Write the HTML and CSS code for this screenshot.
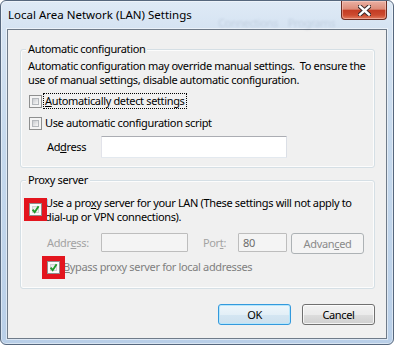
FILE: index.html
```html
<!DOCTYPE html>
<html>
<head>
<meta charset="utf-8">
<link rel="stylesheet" href="styles.css">
</head>
<body>
<div class="window">
  <div class="glass"><span class="g-conn">Connections</span><span class="g-prog">Programs</span></div>
  <div class="titlebar">
    <span class="title">Local Area Network (LAN) Settings</span>
    <div class="close">
      <svg width="13" height="11" viewBox="0 0 13 11"><path d="M2 1.5 L11 9.5 M11 1.5 L2 9.5" stroke="#3b2a2a" stroke-width="4.4" stroke-linecap="square"/><path d="M2 1.5 L11 9.5 M11 1.5 L2 9.5" stroke="#ffffff" stroke-width="2.4" stroke-linecap="square"/></svg>
    </div>
  </div>
  <div class="client">
    <div class="group g1">
      <span class="gtitle">Automatic configuration</span>
      <p class="desc">Automatic configuration may override manual settings.&nbsp; To ensure the<br>use of manual settings, disable automatic configuration.</p>
      <div class="row r1"><span class="cb"><i></i></span><span class="lbl focus"><u>A</u>utomatically detect settings</span></div>
      <div class="row r2"><span class="cb"><i></i></span><span class="lbl">Use automatic configuration script</span></div>
      <div class="addr"><span class="alabel">Ad<u>d</u>ress</span><span class="tb tb-wide"></span></div>
    </div>
    <div class="group g2">
      <span class="gtitle">Proxy server</span>
      <div class="row proxy"><span class="cb checked mark up"><i></i><svg class="check" width="9" height="9" viewBox="0 0 9 9"><path d="M1.6 4.6 L3.7 7.2 L7.6 1.2" fill="none" stroke="#1f9b2b" stroke-width="1.9"/></svg></span><span class="lbl">Use a pro<u>x</u>y server for your LAN (These settings will not apply to<br>dial-up or VPN connections).</span></div>
      <div class="prow"><span class="dlabel addr-l">Addr<u>e</u>ss:</span><span class="tb dis tb-addr"></span><span class="dlabel port-l">Por<u>t</u>:</span><span class="tb dis tb-port">80</span><span class="btn adv">Advan<u>c</u>ed</span></div>
      <div class="row bypass"><span class="cb checked mark"><i></i><svg class="check" width="9" height="9" viewBox="0 0 9 9"><path d="M1.6 4.6 L3.7 7.2 L7.6 1.2" fill="none" stroke="#1f9b2b" stroke-width="1.9"/></svg></span><span class="lbl dim"><u>B</u>ypass proxy server for local addresses</span></div>
    </div>
    <div class="buttons"><span class="btn ok">OK</span><span class="btn cancel">Cancel</span></div>
  </div>
</div>
</body>
</html>
```
FILE: styles.css
```css
* { box-sizing: border-box; }
html, body { margin: 0; padding: 0; }
body {
  width: 394px;
  height: 345px;
  overflow: hidden;
  background: #ffffff;
  font-family: "Noto Sans", "Open Sans", sans-serif;
  font-size: 11px;
  letter-spacing: -0.35px;
  color: #000;
}
.window {
  position: relative;
  width: 394px;
  height: 345px;
  border: 1px solid #56677d;
  border-radius: 6px;
  background: linear-gradient(180deg, #dfeaf6 0, #d5e3f2 28px, #c6d9ed 140px, #b9cfe8 100%);
  box-shadow: inset 0 0 0 1px rgba(255,255,255,0.45);
  padding: 0 6px 5px 6px;
  display: flex;
  flex-direction: column;
  overflow: hidden;
}
.glass {
  position: absolute;
  left: 217px;
  top: 14px;
  display: flex;
  white-space: nowrap;
  color: rgba(40, 60, 90, 0.12);
  filter: blur(1.3px);
  font-size: 11px;
  letter-spacing: -0.4px;
}
.g-prog { margin-left: 10px; }
.titlebar {
  position: relative;
  height: 28px;
  display: flex;
  align-items: flex-start;
  padding-left: 1px;
}
.title {
  line-height: 28px;
  font-size: 11.5px;
  letter-spacing: 0;
  color: #000;
}
.close {
  margin-left: auto;
  width: 46px;
  height: 19px;
  border: 1px solid #6b2c22;
  border-top: none;
  border-radius: 0 0 4px 4px;
  background: linear-gradient(180deg, #eab0a3 0%, #dc8c79 45%, #c43d24 52%, #cc4a2f 78%, #e27c5f 100%);
  box-shadow: inset 0 0 0 1px rgba(255,220,210,0.45);
  display: flex;
  align-items: center;
  justify-content: center;
}
.close svg { display: block; }
.client {
  flex: 1;
  border: 1px solid #6f7b89;
  box-shadow: 0 0 0 1px rgba(255,255,255,0.5);
  background: #f0f0f0;
  padding: 19px 11px 0 12px;
  display: flex;
  flex-direction: column;
}
.group {
  border: 1px solid #d5dfe5;
  border-radius: 3px;
  box-shadow: inset 0 0 0 1px rgba(255,255,255,0.8);
  display: flex;
  flex-direction: column;
  align-items: flex-start;
  padding: 0 7px 9px 7px;
}
.g2 { margin-top: 12px; padding-bottom: 13px; }
.gtitle {
  margin: -8px 0 0 -2px;
  padding: 0 2px;
  background: #f0f0f0;
  line-height: 14px;
}
.desc {
  margin: 3px 0 0 0;
  line-height: 14px;
  white-space: nowrap;
}
.row { display: flex; align-items: center; }
.r1 { margin-top: 6px; height: 16px; }
.r2 { margin-top: 6px; height: 16px; }
.cb {
  position: relative;
  width: 13px;
  height: 13px;
  flex: none;
  margin-left: 1px;
  border: 1px solid #8e8f8f;
  background: #f4f4f4;
  padding: 2px;
}
.cb i {
  display: block;
  width: 7px;
  height: 7px;
  border: 1px solid #b4b8bc;
  background: linear-gradient(135deg, #c9ccd0 0%, #e6e7e8 60%, #f7f7f7 100%);
}
.cb.checked { background: #fbfbfb; }
.cb.checked i {
  border-color: #d0d3d6;
  background: linear-gradient(135deg, #e6e7e8 0%, #f7f7f7 100%);
}
.check {
  position: absolute;
  left: 1px;
  top: 1px;
  display: block;
}
.mark {
  outline: 5px solid #e3151e;
  z-index: 1;
}
.up { margin-bottom: 2px; }
.lbl { margin-left: 3px; line-height: 14px; white-space: nowrap; }
.focus { margin-left: 2px; padding: 0 1px; outline: 1px dotted #000; }
.addr { margin-top: 5px; display: flex; align-items: center; }
.alabel { width: 54px; margin-left: 19px; line-height: 14px; }
.tb {
  background: #fff;
  border: 1px solid;
  border-color: #abadb3 #dbdfe6 #e3e9ef #e2e3ea;
  border-radius: 1px;
}
.tb-wide { width: 186px; height: 22px; }
.proxy { margin-top: 9px; }
.proxy .lbl { margin-left: 3px; }
.prow { margin-top: 9px; display: flex; align-items: flex-start; }
.dlabel { color: #a3a3a3; line-height: 19px; }
.addr-l { width: 54px; margin-left: 19px; }
.port-l { width: 35px; margin-left: 15px; }
.tb.dis {
  background: #f4f4f4;
  border-color: #bdbdbd;
  height: 19px;
  color: #6d6d6d;
  line-height: 17px;
}
.tb-addr { width: 87px; }
.tb-port { width: 49px; padding-left: 4px; }
.btn {
  width: 73px;
  height: 21px;
  border-radius: 3px;
  display: flex;
  align-items: center;
  justify-content: center;
  line-height: 14px;
}
.adv {
  margin-left: 4px;
  border: 1px solid #adb2b5;
  background: #f4f4f4;
  color: #8a8a8a;
}
.bypass { margin-top: 5px; height: 16px; }
.bypass .cb { margin-left: 19px; }
.dim { color: #808080; margin-left: 3px; }
.buttons {
  margin-top: 15px;
  display: flex;
  justify-content: flex-end;
  gap: 11px;
}
.ok {
  border: 1px solid #3399dd;
  box-shadow: inset 0 0 0 1px #b6e6fb;
  background: linear-gradient(180deg, #eef6fb 0%, #e3eff7 50%, #d4e6f2 51%, #cde0ee 100%);
}
.cancel {
  border: 1px solid #707070;
  box-shadow: inset 0 0 0 1px rgba(255,255,255,0.75);
  background: linear-gradient(180deg, #f2f2f2 0%, #ebebeb 50%, #dddddd 51%, #cfcfcf 100%);
}
```
